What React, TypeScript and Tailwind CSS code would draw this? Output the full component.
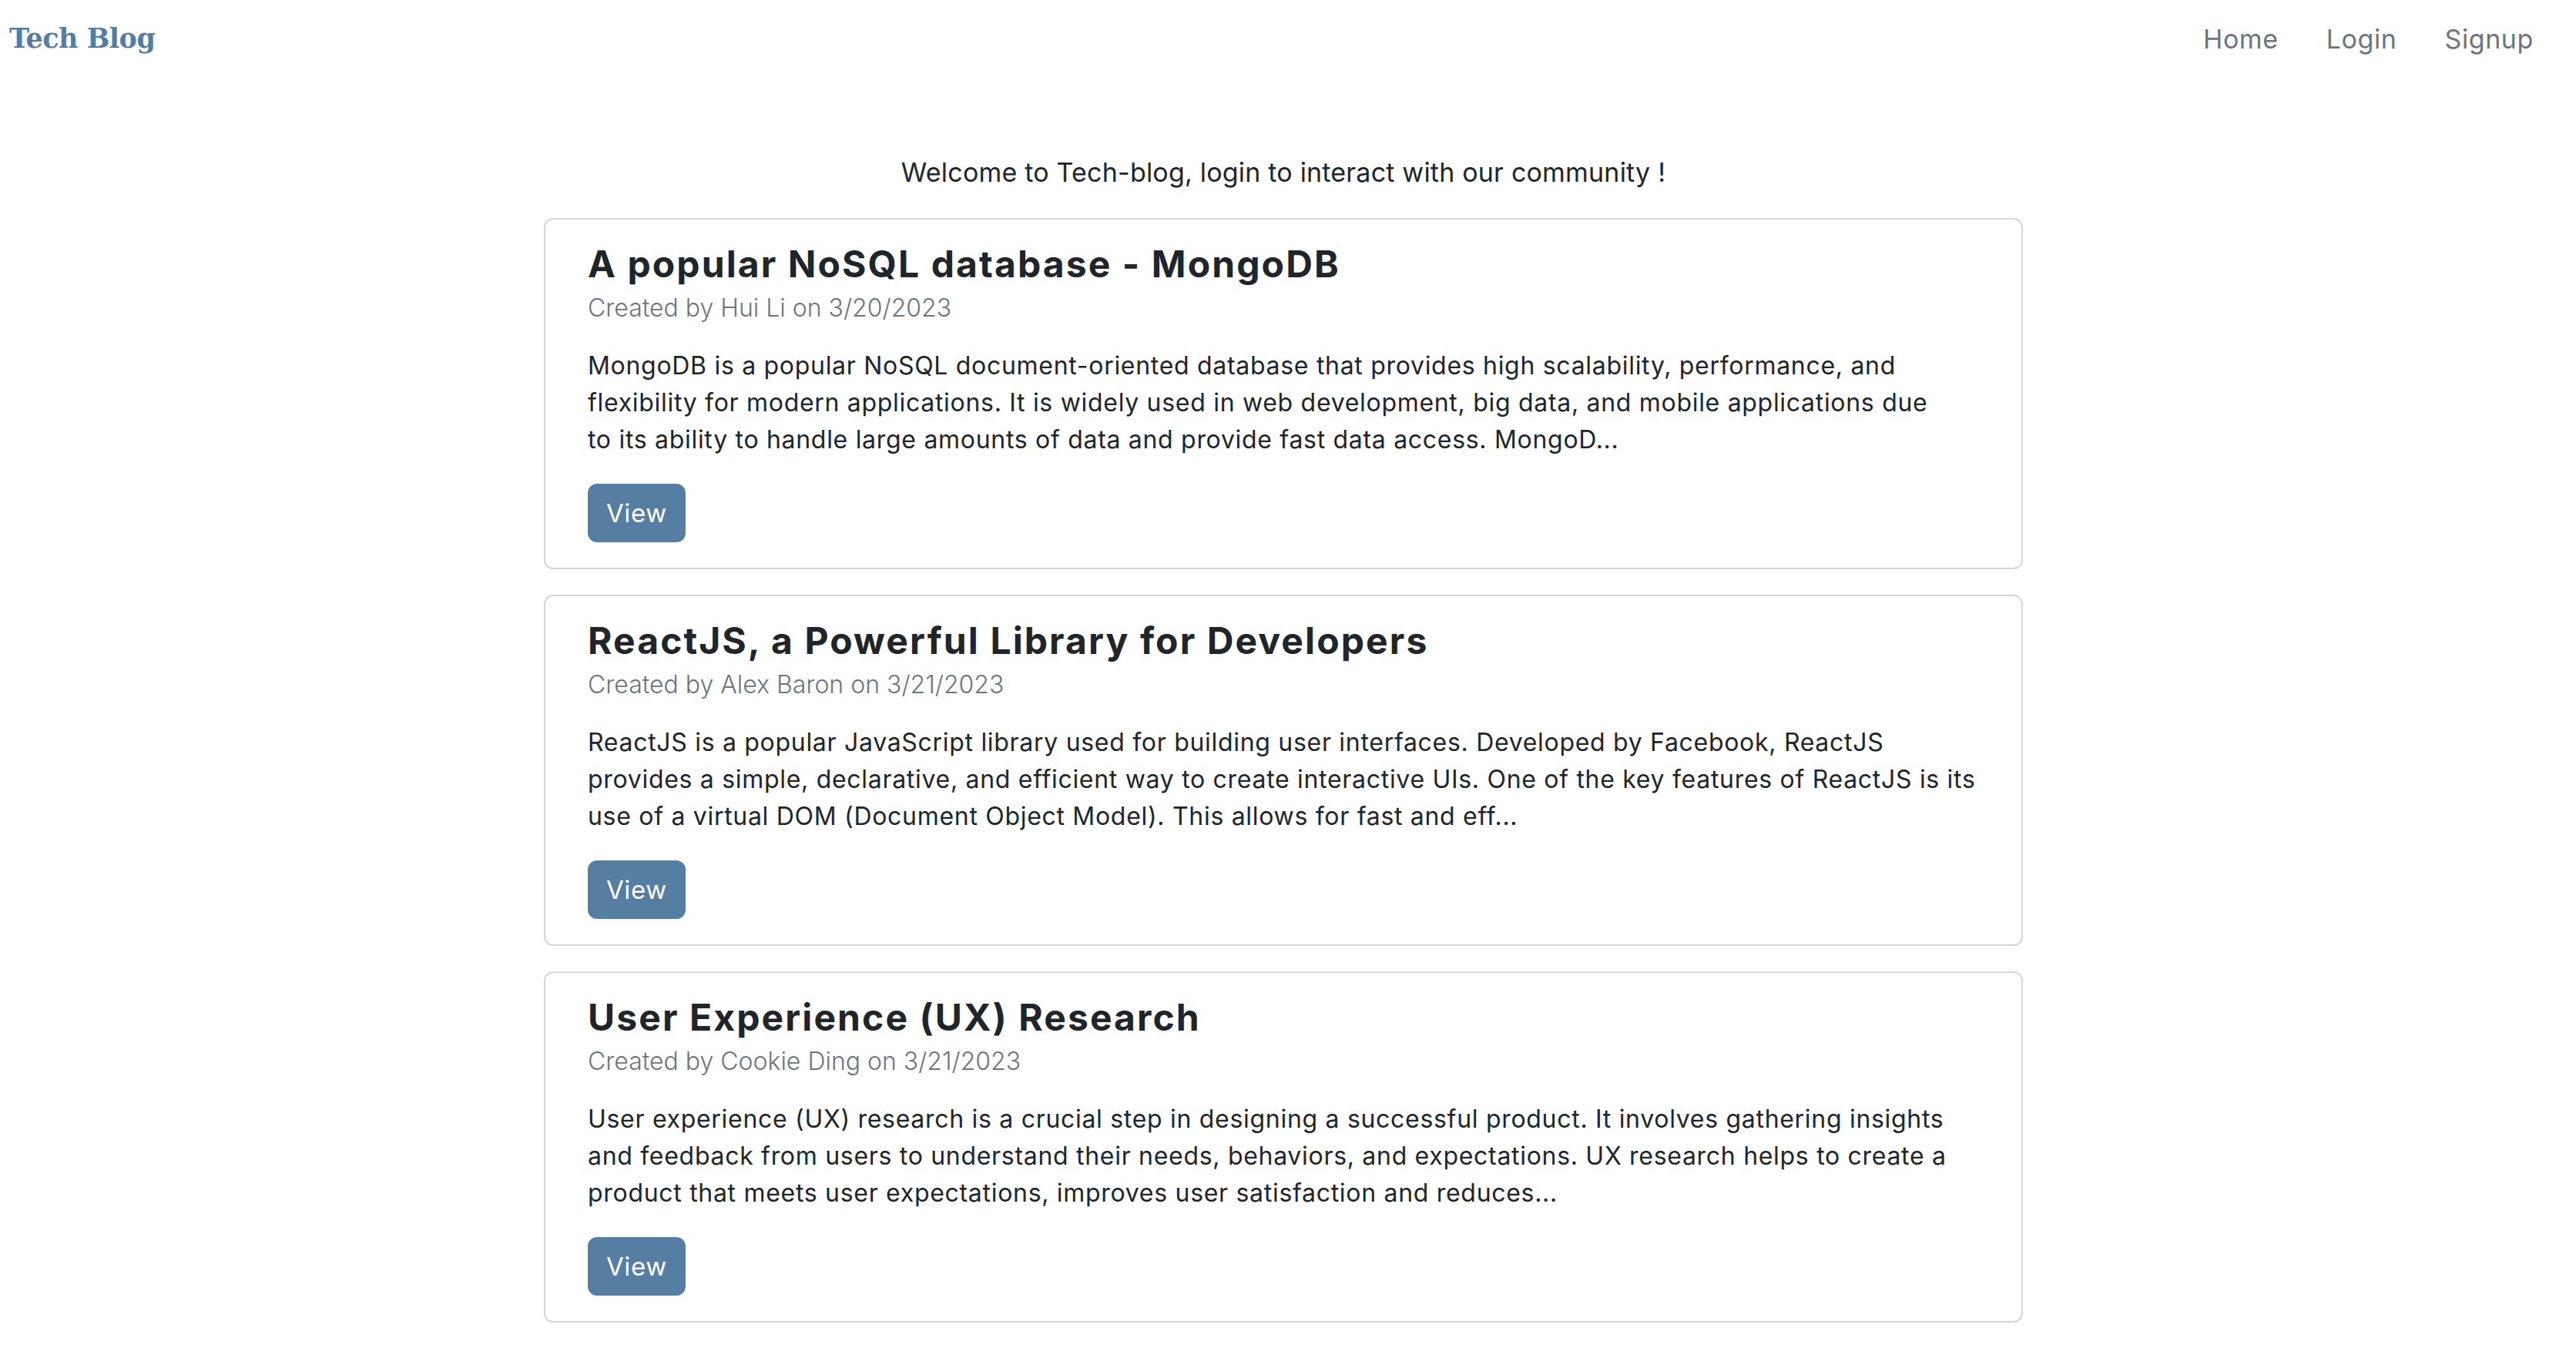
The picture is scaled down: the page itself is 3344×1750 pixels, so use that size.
import React from 'react';

type Post = {
    title: string;
    author: string;
    date: string;
    lines: string[];
};

const posts: Post[] = [
    {
        title: 'A popular NoSQL database - MongoDB',
        author: 'Hui Li',
        date: '3/20/2023',
        lines: [
            'MongoDB is a popular NoSQL document-oriented database that provides high scalability, performance, and',
            'flexibility for modern applications. It is widely used in web development, big data, and mobile applications due',
            'to its ability to handle large amounts of data and provide fast data access. MongoD...',
        ],
    },
    {
        title: 'ReactJS, a Powerful Library for Developers',
        author: 'Alex Baron',
        date: '3/21/2023',
        lines: [
            'ReactJS is a popular JavaScript library used for building user interfaces. Developed by Facebook, ReactJS',
            'provides a simple, declarative, and efficient way to create interactive UIs. One of the key features of ReactJS is its',
            'use of a virtual DOM (Document Object Model). This allows for fast and eff...',
        ],
    },
    {
        title: 'User Experience (UX) Research',
        author: 'Cookie Ding',
        date: '3/21/2023',
        lines: [
            'User experience (UX) research is a crucial step in designing a successful product. It involves gathering insights',
            'and feedback from users to understand their needs, behaviors, and expectations. UX research helps to create a',
            'product that meets user expectations, improves user satisfaction and reduces...',
        ],
    },
    {
        title: 'Getting Started with Node.js',
        author: 'Hui Li',
        date: '3/22/2023',
        lines: ['Node.js is a JavaScript runtime built on Chrome\'s V8 engine that lets developers run JavaScript on the server...'],
    },
];

const PostCard: React.FC<{ post: Post }> = ({ post }) => {
    return (
        <article className="border-2 border-[#d6d6d6] rounded-[12px] bg-white px-[55px] pt-[30px] pb-[33px]">
            <h2 className="text-[48px] leading-[56px] font-bold text-[#212529] tracking-[2.1px]">{post.title}</h2>
            <p className="text-[32px] leading-[48px] text-[#6c757d] font-light mt-[5px]">
                Created by {post.author} on {post.date}
            </p>
            <p className="text-[32px] leading-[48px] text-[#212529] tracking-[0.7px] mt-[27px] whitespace-nowrap">
                {post.lines.map((line, i) => (
                    <React.Fragment key={i}>
                        {i > 0 && <br />}
                        {line}
                    </React.Fragment>
                ))}
            </p>
            <button className="mt-[33px] h-[76px] px-[24px] rounded-[12px] bg-[#567ea3] text-white text-[33px] leading-[48px] tracking-[0.6px]">
                View
            </button>
        </article>
    );
};

const App: React.FC = () => {
    return (
        <div className="min-h-screen bg-white font-['Inter',sans-serif] text-[#212529]">
            <header className="flex items-center justify-between h-[100px] pl-[12px] pr-[55px]">
                <a href="#" className="font-['DejaVu_Serif',serif] font-bold text-[35px] text-[#567ca0] tracking-[-0.5px]">
                    Tech Blog
                </a>
                <nav className="flex items-center gap-[62px] text-[34px] text-[#6c757d] tracking-[0.6px]">
                    <a href="#">Home</a>
                    <a href="#">Login</a>
                    <a href="#">Signup</a>
                </nav>
            </header>

            <main className="pr-[12px]">
                <div className="w-[1920px] mx-auto">
                    <p className="text-center text-[34px] leading-[50px] tracking-[0.2px] mt-[99px] mb-[34px]">
                        Welcome to Tech-blog, login to interact with our community !
                    </p>
                    <div className="flex flex-col gap-[33px] pb-[40px]">
                        {posts.map((post) => (
                            <PostCard key={post.title} post={post} />
                        ))}
                    </div>
                </div>
            </main>
        </div>
    );
};

export default App;
